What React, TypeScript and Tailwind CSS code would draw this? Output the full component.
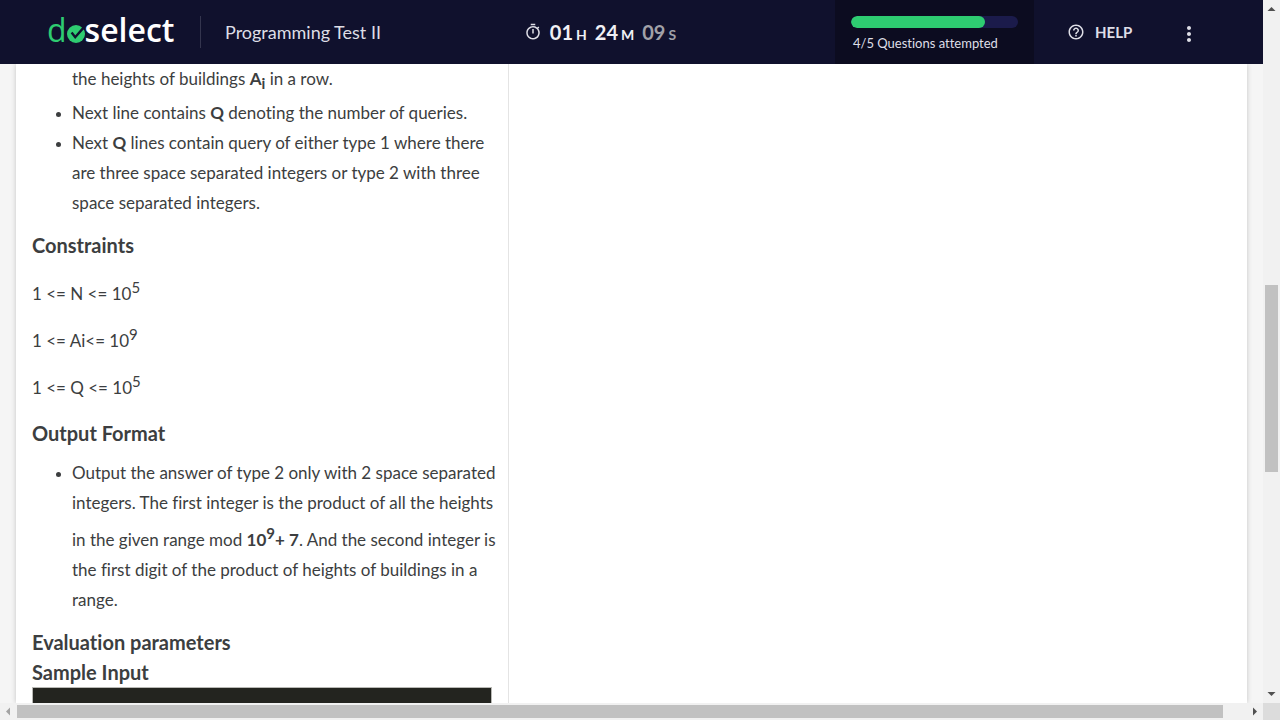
import type { ReactNode } from "react";
import { MdHelpOutline, MdMoreVert, MdOutlineTimer } from "react-icons/md";

function Logo() {
  return (
    <a href="#" aria-label="doselect" className="flex h-[60px] w-[153px] shrink-0 items-center font-['Open_Sans',sans-serif] text-[32px] leading-8 text-white">
      <span className="text-[#2ecc71]">d</span>
      <svg viewBox="0 0 18 18" className="mt-2 h-[18px] w-[18px] shrink-0" aria-hidden="true">
        <circle cx="9" cy="9" r="9" fill="#2ecc71" />
        <path d="M4.6 7.6l3.6 4.6L16.6 2.6" fill="none" stroke="#10112d" strokeWidth="2.4" />
      </svg>
      <span className="font-semibold">select</span>
    </a>
  );
}

function TimePart({ value, unit, dim = false }: { value: string; unit: string; dim?: boolean }) {
  return (
    <span className={dim ? "text-[#a1a1a8]" : "text-[#f0f0f4]"}>
      <span className="text-xl font-bold">{value}</span>
      <span className="ml-[3px] text-sm font-bold">{unit}</span>
    </span>
  );
}

function Header() {
  return (
    <header className="flex h-16 shrink-0 items-stretch bg-[#10112d] pl-[47px] text-[#dedee6]">
      <Logo />
      <div className="my-4 flex shrink-0 items-center border-l border-[#34354e] pl-6">
        <h1 className="text-lg">Programming Test II</h1>
      </div>
      <div className="flex flex-1 items-center justify-center gap-2 pr-4">
        <MdOutlineTimer className="h-[18px] w-[18px]" aria-hidden="true" />
        <div className="flex items-baseline gap-2" role="timer">
          <TimePart value="01" unit="H" />
          <TimePart value="24" unit="M" />
          <TimePart value="09" unit="S" dim />
        </div>
      </div>
      <div className="w-[199px] shrink-0 bg-[#0c0c20] px-4 pt-4">
        <div className="h-3 overflow-hidden rounded-full bg-[#1b1b4b]">
          <div className="h-full w-4/5 rounded-full bg-[#2ecc71]" />
        </div>
        <p className="mt-1 px-0.5 text-[13px] leading-[22px]">4/5 Questions attempted</p>
      </div>
      <div className="flex w-[229px] shrink-0 items-center pl-[33px]">
        <button type="button" className="flex items-center gap-2.5 text-[15px] font-bold">
          <MdHelpOutline className="h-[18px] w-[18px]" aria-hidden="true" />
          HELP
        </button>
        <button type="button" aria-label="More options" className="ml-[45px] pt-1">
          <MdMoreVert className="h-6 w-6" />
        </button>
      </div>
    </header>
  );
}

function Heading({ children }: { children: ReactNode }) {
  return <h2 className="text-xl leading-[30px] font-bold">{children}</h2>;
}

function Power({ children }: { children: ReactNode }) {
  return <sup className="static align-super text-[15px] leading-[30px]">{children}</sup>;
}

function Problem() {
  return (
    <article className="w-[493px] shrink-0 border-r border-[#e4e4e4] pr-2 pl-4 text-[17px] leading-[30px] text-[#3c3e40]">
      <ul className="list-disc pl-10 marker:text-sm">
        <li className="list-none">
          the heights of buildings <b>A<sub className="static align-sub text-[15px] leading-[30px]">i</sub></b> in a row.
        </li>
        <li>Next line contains <b>Q</b> denoting the number of queries.</li>
        <li>
          Next <b>Q</b> lines contain query of either type 1 where there are three space separated
          integers or type 2 with three space separated integers.
        </li>
      </ul>
      <div className="mt-3">
        <Heading>Constraints</Heading>
      </div>
      <div className="mt-3 flex flex-col gap-2.5">
        <p>1 &lt;= N &lt;= 10<Power>5</Power></p>
        <p>1 &lt;= Ai&lt;= 10<Power>9</Power></p>
        <p>1 &lt;= Q &lt;= 10<Power>5</Power></p>
      </div>
      <div className="mt-4">
        <Heading>Output Format</Heading>
      </div>
      <ul className="mt-2.5 list-disc pl-10 marker:text-sm">
        <li>
          Output the answer of type 2 only with 2 space separated integers. The first integer is the
          product of all the heights in the given range mod <b>10<Power>9</Power>+ 7</b>. And the
          second integer is the first digit of the product of heights of buildings in a range.
        </li>
      </ul>
      <div className="mt-3">
        <Heading>Evaluation parameters</Heading>
        <Heading>Sample Input</Heading>
      </div>
      <pre className="mr-2 h-24 border border-[#b9b9b5] bg-[#23241f]" />
    </article>
  );
}

function Arrow({ points, color }: { points: string; color: string }) {
  return (
    <svg viewBox="0 0 17 17" className="h-[17px] w-[17px] shrink-0" aria-hidden="true">
      <polygon points={points} fill={color} />
    </svg>
  );
}

export default function App() {
  return (
    <div className="grid h-screen grid-cols-[minmax(0,1fr)_17px] grid-rows-[minmax(0,1fr)_17px] overflow-hidden bg-[#f1f1f1] font-[Lato,sans-serif] [font-variant-ligatures:none]">
      <div className="flex min-h-0 flex-col">
        <Header />
        <main className="flex min-h-0 flex-1 overflow-hidden bg-[#f5f5f5] px-4">
          <div className="flex flex-1 bg-white shadow-[0_0_5px_rgba(0,0,0,0.2)]">
            <Problem />
          </div>
        </main>
      </div>
      <div className="flex flex-col items-center" aria-hidden="true">
        <Arrow points="4.5,11 8.5,7 12.5,11" color="#505050" />
        <div className="grow-[268]" />
        <div className="w-[13px] grow-[187] bg-[#c1c1c1]" />
        <div className="grow-[214]" />
        <Arrow points="4.5,6 8.5,10 12.5,6" color="#505050" />
      </div>
      <div className="flex items-center" aria-hidden="true">
        <Arrow points="10,4.5 6,8.5 10,12.5" color="#a3a3a3" />
        <div className="h-[13px] grow-[1206] bg-[#c1c1c1]" />
        <div className="grow-[23]" />
        <Arrow points="7,4.5 11,8.5 7,12.5" color="#505050" />
      </div>
      <div className="bg-[#dcdcdc]" />
    </div>
  );
}
